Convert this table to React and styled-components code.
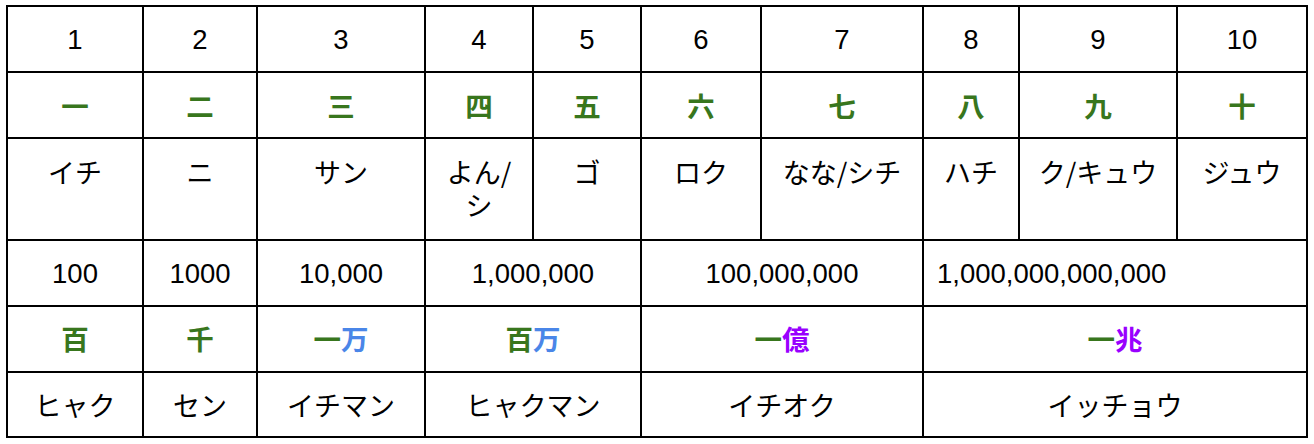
import React from "react";
import styled, { createGlobalStyle } from "styled-components";

const Global = createGlobalStyle`
  html, body { margin: 0; padding: 0; background: #fff; }
  body { font-family: "Liberation Sans", "Noto Sans CJK JP", sans-serif; color: #000; }
`;

const COLS = [136, 114, 168, 108, 108, 120, 162, 96, 158, 130];

const Table = styled.div`
  display: grid;
  grid-template-columns: ${COLS.map((w) => `${w}px`).join(" ")};
  grid-template-rows: 66px 66px 102px 66px 66px 65px;
  width: max-content;
  margin: 5px 0 0 6px;
  border-left: 2px solid #000;
  border-top: 2px solid #000;
`;

const Cell = styled.div`
  box-sizing: border-box;
  grid-column: span ${(p) => p.$span || 1};
  border-right: 2px solid #000;
  border-bottom: 2px solid #000;
  display: flex;
  flex-direction: column;
  justify-content: ${(p) => (p.$top ? "flex-start" : "center")};
  align-items: ${(p) => (p.$left ? "flex-start" : "center")};
  text-align: ${(p) => (p.$left ? "left" : "center")};
  padding: ${(p) => (p.$top ? "16px 10px 0" : p.$left ? "0 0 0 13px" : "0 4px")};
  font-size: 27.5px;
  line-height: 33px;
  overflow: hidden;
`;

const Kanji = styled.span`
  color: ${(p) => p.$c};
  font-family: "Noto Sans CJK JP", sans-serif;
  font-weight: 700;
  font-size: 27.5px;
`;

const Kana = styled.span`
  font-family: "Noto Sans CJK JP", sans-serif;
  font-size: 27px;
`;

const G = "#38761d";
const B = "#4a86e8";
const P = "#9900ff";

const nums = ["1", "2", "3", "4", "5", "6", "7", "8", "9", "10"];
const kanji = ["一", "二", "三", "四", "五", "六", "七", "八", "九", "十"];
const readings = ["イチ", "ニ", "サン", "よん/シ", "ゴ", "ロク", "なな/シチ", "ハチ", "ク/キュウ", "ジュウ"];

const big = [
  { n: "100", k: [["百", G]], r: "ヒャク", span: 1 },
  { n: "1000", k: [["千", G]], r: "セン", span: 1 },
  { n: "10,000", k: [["一", G], ["万", B]], r: "イチマン", span: 1 },
  { n: "1,000,000", k: [["百", G], ["万", B]], r: "ヒャクマン", span: 2 },
  { n: "100,000,000", k: [["一", G], ["億", P]], r: "イチオク", span: 2 },
  { n: "1,000,000,000,000", k: [["一", G], ["兆", P]], r: "イッチョウ", span: 3, left: true },
];

export default function App() {
  return (
    <>
      <Global />
      <Table>
        {nums.map((n) => (
          <Cell key={"n" + n}>{n}</Cell>
        ))}
        {kanji.map((k) => (
          <Cell key={"k" + k}>
            <Kanji $c={G}>{k}</Kanji>
          </Cell>
        ))}
        {readings.map((r) => (
          <Cell key={"r" + r} $top>
            <Kana>{r}</Kana>
          </Cell>
        ))}
        {big.map((b) => (
          <Cell key={"bn" + b.n} $span={b.span} $left={b.left}>
            {b.n}
          </Cell>
        ))}
        {big.map((b) => (
          <Cell key={"bk" + b.n} $span={b.span}>
            <div>
              {b.k.map(([ch, c], i) => (
                <Kanji key={i} $c={c}>
                  {ch}
                </Kanji>
              ))}
            </div>
          </Cell>
        ))}
        {big.map((b) => (
          <Cell key={"br" + b.n} $span={b.span}>
            <Kana>{b.r}</Kana>
          </Cell>
        ))}
      </Table>
    </>
  );
}
